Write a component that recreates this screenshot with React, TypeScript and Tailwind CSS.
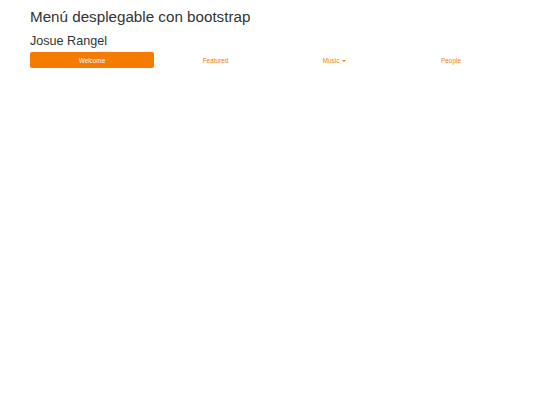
export default function App() {
  const items = ['Welcome', 'Featured', 'Music', 'People']
  return (
    <div className="min-h-[405px] bg-white px-[30px] font-['Liberation_Sans',Arial,sans-serif] text-[#333]">
      <h1 className="pt-[8px] text-[15.2px] leading-[17px]">Menú desplegable con bootstrap</h1>
      <h3 className="mt-[9px] text-[12.6px] leading-[14px]">Josue Rangel</h3>
      <ul className="mt-[4px] grid w-[480px] grid-cols-[124px_123px_115px_118px]">
        {items.map((item, i) => (
          <li key={item}>
            <a
              className={
                i === 0
                  ? 'flex h-[16px] items-center justify-center rounded-[2px] bg-[#f57c00] pt-[1px] text-[6.4px] text-white'
                  : 'flex h-[16px] items-center justify-center pt-[1px] text-[6.4px] text-[#f57c00]'
              }
            >
              {item}
              {item === 'Music' && (
                <span className="ml-[3px] inline-block h-0 w-0 border-x-[2px] border-t-[2px] border-x-transparent border-t-[#f57c00]" />
              )}
            </a>
          </li>
        ))}
      </ul>
    </div>
  )
}
